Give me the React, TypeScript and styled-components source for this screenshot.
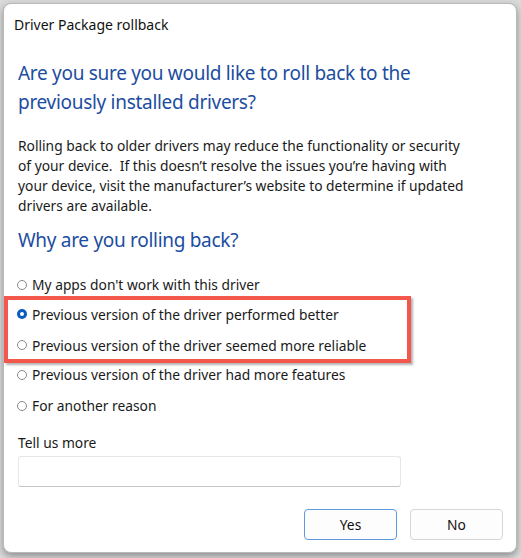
import React, { useState } from "react";
import styled, { createGlobalStyle } from "styled-components";

const GlobalStyle = createGlobalStyle`
  html, body {
    margin: 0;
    padding: 0;
    background: #dadada;
  }
  body {
    font-family: "Noto Sans", "Open Sans", sans-serif;
    color: #1a1a1a;
  }
`;

const Page = styled.div`
  width: 521px;
  height: 558px;
  padding: 3px 4px 0 3px;
  box-sizing: border-box;
`;

const Dialog = styled.div`
  width: 514px;
  height: 550px;
  box-sizing: border-box;
  background: #fff;
  border: 1px solid #b9b9b9;
  border-radius: 8px;
  box-shadow: 0 3px 7px rgba(0, 0, 0, 0.35);
  display: flex;
  flex-direction: column;
`;

const TitleBar = styled.div`
  height: 40px;
  display: flex;
  align-items: center;
  padding-left: 10px;
  font-size: 14px;
  color: #111;
`;

const Content = styled.div`
  display: flex;
  flex-direction: column;
  padding: 0 14px 0 13px;
`;

const Heading = styled.h1<{ $top: number }>`
  margin: ${(p) => p.$top}px 0 0 1px;
  font-size: 19px;
  letter-spacing: -0.3px;
  font-weight: 400;
  line-height: 29px;
  color: #1c4da0;
`;

const Paragraph = styled.p`
  margin: 19px 0 0 1px;
  font-size: 13.8px;
  line-height: 20px;
  white-space: nowrap;
`;

const RadioList = styled.div`
  margin-top: 14px;
  display: flex;
  flex-direction: column;
`;

const Highlight = styled.div`
  margin: -4px 0 -4px -13px;
  width: 407px;
  box-sizing: border-box;
  border: 4px solid #f4574b;
  box-shadow: 2px 2px 2px rgba(0, 0, 0, 0.3);
  padding-left: 9px;
  display: flex;
  flex-direction: column;
  gap: 3px;
`;

const Row = styled.label<{ $h: number }>`
  height: ${(p) => p.$h}px;
  display: flex;
  align-items: center;
  gap: 5px;
  font-size: 13.8px;
  cursor: pointer;
`;

const Dot = styled.span<{ $on: boolean }>`
  width: 10px;
  height: 10px;
  box-sizing: border-box;
  border-radius: 50%;
  flex-shrink: 0;
  background: ${(p) => (p.$on ? "#0a5cc0" : "#fff")};
  border: ${(p) => (p.$on ? "none" : "1px solid #8a8a8a")};
  display: flex;
  align-items: center;
  justify-content: center;
  &::after {
    content: "";
    width: 4px;
    height: 4px;
    border-radius: 50%;
    background: #fff;
    display: ${(p) => (p.$on ? "block" : "none")};
  }
`;

const FieldLabel = styled.div`
  margin: 11.5px 0 0 1px;
  font-size: 13.8px;
  line-height: 20px;
`;

const TextBox = styled.input`
  margin: 3px 0 0 1px;
  width: 383px;
  height: 31px;
  box-sizing: border-box;
  border: 1px solid #e6e6e6;
  border-bottom-color: #c4c4c4;
  border-radius: 3px;
  outline: none;
  padding: 0 8px;
  font: inherit;
  font-size: 13.5px;
`;

const Buttons = styled.div`
  margin: 22px -1px 0 0;
  display: flex;
  justify-content: flex-end;
  gap: 13px;
`;

const Button = styled.button<{ $primary?: boolean }>`
  width: 93px;
  height: 31px;
  box-sizing: border-box;
  border-radius: 4px;
  background: #fdfdfd;
  border: 1px solid ${(p) => (p.$primary ? "#5d9be0" : "#d6d6d6")};
  font-family: "Noto Sans", sans-serif;
  font-size: 13.8px;
  color: #111;
  cursor: pointer;
`;

const reasons = [
  "My apps don't work with this driver",
  "Previous version of the driver performed better",
  "Previous version of the driver seemed more reliable",
  "Previous version of the driver had more features",
  "For another reason",
];

export default function App() {
  const [choice, setChoice] = useState(1);

  const renderRow = (i: number, h: number) => (
    <Row key={i} $h={h} onClick={() => setChoice(i)}>
      <Dot $on={choice === i} />
      {reasons[i]}
    </Row>
  );

  return (
    <>
      <GlobalStyle />
      <Page>
        <Dialog>
          <TitleBar>Driver Package rollback</TitleBar>
          <Content>
            <Heading $top={15}>
              Are you sure you would like to roll back to the
              <br />
              previously installed drivers?
            </Heading>
            <Paragraph>
              Rolling back to older drivers may reduce the functionality or security
              <br />
              of your device.&nbsp; If this doesn’t resolve the issues you’re having with
              <br />
              your device, visit the manufacturer’s website to determine if updated
              <br />
              drivers are available.
            </Paragraph>
            <Heading $top={10}>Why are you rolling back?</Heading>
            <RadioList>
              {renderRow(0, 31)}
              <Highlight>
                {renderRow(1, 28)}
                {renderRow(2, 28)}
              </Highlight>
              {renderRow(3, 31)}
              {renderRow(4, 31)}
            </RadioList>
            <FieldLabel>Tell us more</FieldLabel>
            <TextBox />
            <Buttons>
              <Button $primary>Yes</Button>
              <Button>No</Button>
            </Buttons>
          </Content>
        </Dialog>
      </Page>
    </>
  );
}
